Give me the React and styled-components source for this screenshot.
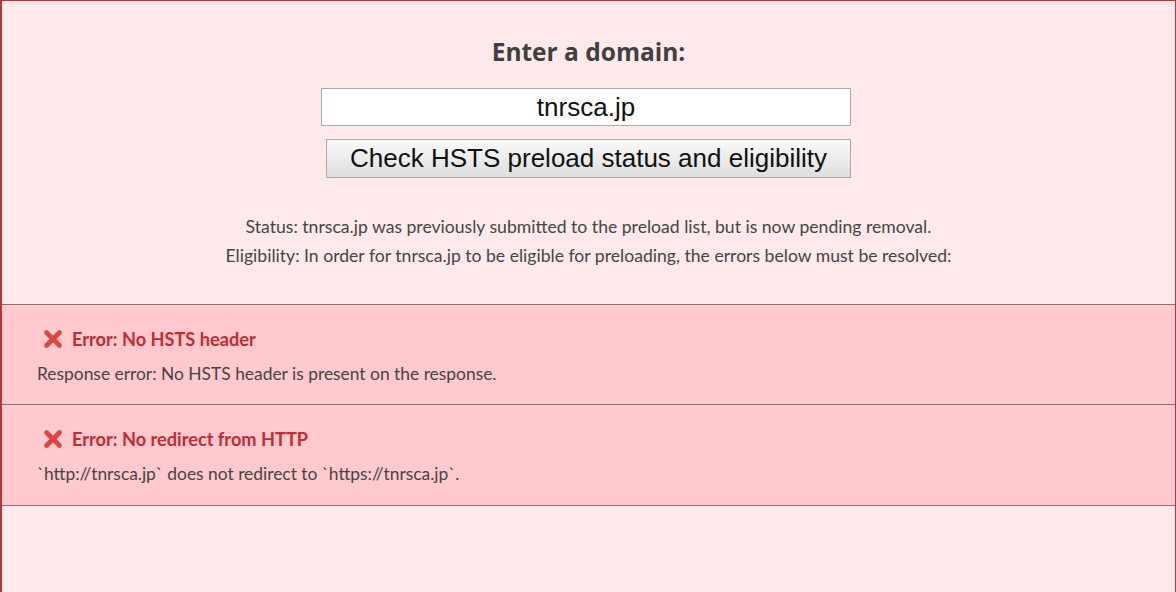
import React from "react";
import styled, { createGlobalStyle } from "styled-components";

const Global = createGlobalStyle`
  html, body { margin: 0; padding: 0; }
  body { font-family: Lato, "Open Sans", sans-serif; background: #ffe9eb; }
`;

const Page = styled.div`
  box-sizing: border-box;
  min-height: 592px;
  background: #ffe9eb;
  border: 1px solid #b3373a;
  border-bottom: none;
  border-left-width: 2px;
  color: #454545;
`;

const Form = styled.form`
  display: flex;
  flex-direction: column;
  align-items: center;
  padding-top: 35px;
`;

const Heading = styled.h2`
  margin: 0 0 20px;
  font-family: "Open Sans", sans-serif;
  font-size: 24.5px;
  font-weight: 700;
  line-height: 32px;
  color: #404040;
`;

const DomainInput = styled.input`
  box-sizing: border-box;
  width: 530px;
  height: 38px;
  margin-left: -5px;
  border: 1px solid #a9a9a9;
  background: #fff;
  text-align: center;
  font-family: "Liberation Sans", Arial, sans-serif;
  font-size: 26px;
  color: #111;
  outline: none;
  padding: 0;
`;

const Button = styled.button`
  box-sizing: border-box;
  width: 525px;
  height: 39px;
  margin-top: 13px;
  margin-left: 0;
  border: 1px solid #a9a9a9;
  border-radius: 0;
  background: linear-gradient(#fafafa, #dedede);
  font-family: "Liberation Sans", Arial, sans-serif;
  font-size: 26px;
  color: #111;
  padding: 0;
`;

const Summary = styled.div`
  margin-top: 34px;
  text-align: center;
  font-size: 17.6px;
  line-height: 29px;
  color: #454545;
`;

const Line = styled.div``;

const Results = styled.div`
  margin-top: 34px;
`;

const ErrorRow = styled.div`
  box-sizing: border-box;
  height: 101px;
  background: #ffc9ce;
  border-top: 1px solid #8c7272;
  border-bottom: 1px solid #8c7272;
  padding: 19px 35px 0;
  & + & { border-top: none; }
`;

const ErrorTitle = styled.div`
  display: flex;
  align-items: center;
  gap: 9px;
  padding-left: 6px;
  font-size: 18.2px;
  font-weight: 700;
  line-height: 30px;
  color: #c62a33;
`;

const ErrorText = styled.div`
  margin-top: 8px;
  font-size: 17.4px;
  line-height: 24px;
  color: #454545;
`;

const Cross = () => (
  <svg width="20" height="20" viewBox="0 0 20 20" aria-hidden="true">
    <path d="M3.5 3.5 L16.5 16.5 M16.5 3.5 L3.5 16.5" stroke="#e0443e" strokeWidth="4.6" strokeLinecap="round" />
  </svg>
);

const errors = [
  {
    title: "Error: No HSTS header",
    text: "Response error: No HSTS header is present on the response.",
  },
  {
    title: "Error: No redirect from HTTP",
    text: "`http://tnrsca.jp` does not redirect to `https://tnrsca.jp`.",
  },
];

export default function App() {
  return (
    <>
      <Global />
      <Page>
        <Form onSubmit={(e) => e.preventDefault()}>
          <Heading>Enter a domain:</Heading>
          <DomainInput defaultValue="tnrsca.jp" />
          <Button type="submit">Check HSTS preload status and eligibility</Button>
        </Form>
        <Summary>
          <Line>Status: tnrsca.jp was previously submitted to the preload list, but is now pending removal.</Line>
          <Line>Eligibility: In order for tnrsca.jp to be eligible for preloading, the errors below must be resolved:</Line>
        </Summary>
        <Results>
          {errors.map((e) => (
            <ErrorRow key={e.title}>
              <ErrorTitle>
                <Cross />
                {e.title}
              </ErrorTitle>
              <ErrorText>{e.text}</ErrorText>
            </ErrorRow>
          ))}
        </Results>
      </Page>
    </>
  );
}
